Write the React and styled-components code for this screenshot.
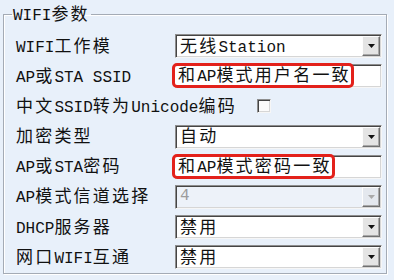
import React from "react";
import styled, { createGlobalStyle } from "styled-components";

const GlobalStyle = createGlobalStyle`
  html, body {
    margin: 0;
    padding: 0;
    background: #e8f0fa;
  }
  body {
    width: 394px;
    height: 280px;
    overflow: hidden;
    font-family: "Liberation Mono", "Noto Sans CJK SC", monospace;
    font-size: 16px;
    line-height: 19px;
    color: #111;
  }
`;

const CJK = /([\u2e80-\u9fff\uff00-\uffef]+)/;

const Run = styled.span`
  font-family: ${(p) =>
    p.$cjk ? '"Noto Sans CJK SC", sans-serif' : '"Liberation Mono", monospace'};
  font-size: ${(p) => (p.$cjk ? "17px" : "16px")};
  letter-spacing: ${(p) => (p.$cjk ? "2.2px" : "0")};
`;

const Line = styled.span`
  white-space: nowrap;
`;

// SimSun-like cells: half width latin, double width hanzi
const T = ({ children }) => (
  <Line>
    {String(children)
      .split(CJK)
      .filter(Boolean)
      .map((s, i) => (
        <Run key={i} $cjk={CJK.test(s)}>
          {s}
        </Run>
      ))}
  </Line>
);

const Group = styled.fieldset`
  margin: 3px 0 0 3px;
  width: 384px;
  box-sizing: border-box;
  border: 1px solid #a4abb5;
  box-shadow: inset 1px 1px 0 #fff, 1px 1px 0 #fff;
  padding: 8px 3px 4px 12px;
  min-width: 0;
`;

const Legend = styled.legend`
  margin-left: -4px;
  padding: 0 1px;
  line-height: 19px;
`;

const Form = styled.div`
  display: grid;
  grid-template-columns: 159px 207px;
  grid-auto-rows: 24px;
  row-gap: 6.2px;
  align-items: center;
`;

const Label = styled.div`
  white-space: nowrap;
`;

const WideRow = styled.div`
  grid-column: 1 / -1;
  display: flex;
  align-items: center;
  gap: 20px;
`;

const Field = styled.div`
  height: 24px;
  box-sizing: border-box;
  display: flex;
  align-items: center;
  background: ${(p) => (p.$disabled ? "#edf2f9" : "#fff")};
  border: 1px solid;
  border-color: #8e8e8e #f6f6f6 #f6f6f6 #8e8e8e;
  box-shadow: inset 1px 1px 0 #454545, inset -1px -1px 0 #d6d6d6;
  padding: 0 1px 0 4px;
  color: ${(p) => (p.$disabled ? "#9c9c9c" : "#111")};
`;

const Value = styled.div`
  flex: 1;
`;

const DropButton = styled.div`
  width: 18px;
  height: 20px;
  box-sizing: border-box;
  background: ${(p) => (p.$disabled ? "#e4e8ee" : "#e4e4e4")};
  border: 1px solid;
  border-color: #fdfdfd #707070 #707070 #fdfdfd;
  box-shadow: inset -1px -1px 0 #a8a8a8;
  display: flex;
  align-items: center;
  justify-content: center;
`;

const Mark = styled.div`
  display: flex;
  align-items: center;
  height: 25px;
  box-sizing: border-box;
  border: 3px solid #e3211b;
  border-radius: 5px;
  padding: 0 0 0 3px;
  margin: -1px 0 0 -8px;
  background: #fff;
`;

const Check = styled.div`
  width: 14px;
  height: 14px;
  box-sizing: border-box;
  background: #fbfbfb;
  border: 1px solid;
  border-color: #8e8e8e #f6f6f6 #f6f6f6 #8e8e8e;
  box-shadow: inset 1px 1px 0 #454545, inset -1px -1px 0 #d6d6d6;
`;

const Arrow = ({ disabled }) => (
  <svg width="7" height="4" viewBox="0 0 7 4">
    <polygon points="0,0 7,0 3.5,4" fill={disabled ? "#a9a9a9" : "#111"} />
  </svg>
);

const Combo = ({ value, disabled }) => (
  <Field $disabled={disabled}>
    <Value>
      <T>{value}</T>
    </Value>
    <DropButton $disabled={disabled}>
      <Arrow disabled={disabled} />
    </DropButton>
  </Field>
);

const TextBox = ({ value }) => (
  <Field>
    <Mark>
      <T>{value}</T>
    </Mark>
  </Field>
);

export default function App() {
  return (
    <>
      <GlobalStyle />
      <Group>
        <Legend>
          <T>WIFI参数</T>
        </Legend>
        <Form>
          <Label><T>WIFI工作模</T></Label>
          <Combo value="无线Station" />

          <Label><T>AP或STA SSID</T></Label>
          <TextBox value="和AP模式用户名一致" />

          <WideRow>
            <Label><T>中文SSID转为Unicode编码</T></Label>
            <Check />
          </WideRow>

          <Label><T>加密类型</T></Label>
          <Combo value="自动" />

          <Label><T>AP或STA密码</T></Label>
          <TextBox value="和AP模式密码一致" />

          <Label><T>AP模式信道选择</T></Label>
          <Combo value="4" disabled />

          <Label><T>DHCP服务器</T></Label>
          <Combo value="禁用" />

          <Label><T>网口WIFI互通</T></Label>
          <Combo value="禁用" />
        </Form>
      </Group>
    </>
  );
}
